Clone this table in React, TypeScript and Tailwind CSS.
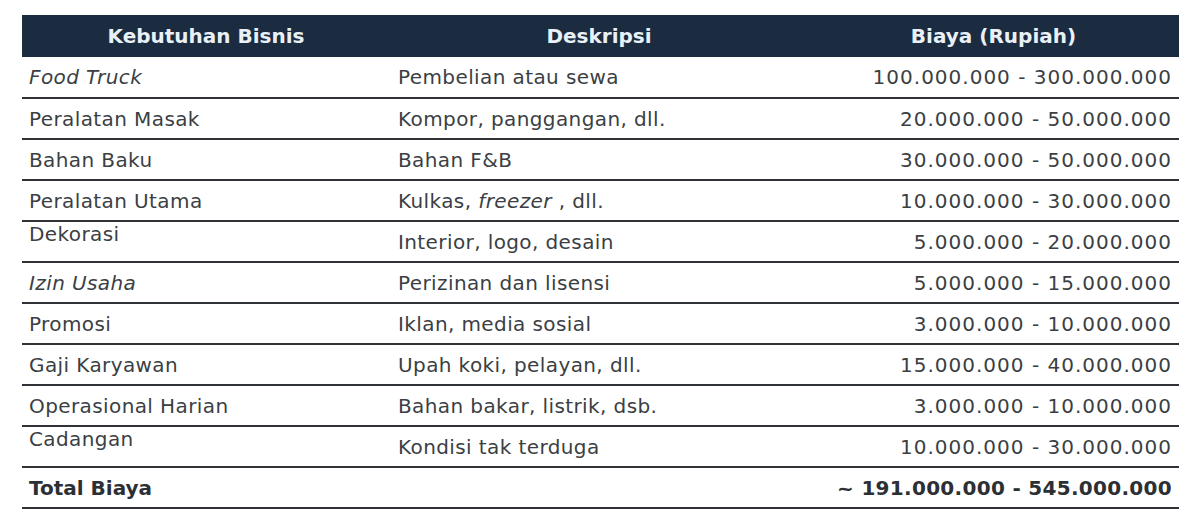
const rows: { need: React.ReactNode; desc: React.ReactNode; cost: string; top?: boolean }[] = [
  { need: <i>Food Truck</i>, desc: "Pembelian atau sewa", cost: "100.000.000 - 300.000.000" },
  { need: "Peralatan Masak", desc: "Kompor, panggangan, dll.", cost: "20.000.000 - 50.000.000" },
  { need: "Bahan Baku", desc: "Bahan F&B", cost: "30.000.000 - 50.000.000" },
  {
    need: "Peralatan Utama",
    desc: (
      <>
        Kulkas, <i>freezer</i> , dll.
      </>
    ),
    cost: "10.000.000 - 30.000.000",
  },
  { need: "Dekorasi", desc: "Interior, logo, desain", cost: "5.000.000 - 20.000.000", top: true },
  { need: <i>Izin Usaha</i>, desc: "Perizinan dan lisensi", cost: "5.000.000 - 15.000.000" },
  { need: "Promosi", desc: "Iklan, media sosial", cost: "3.000.000 - 10.000.000" },
  { need: "Gaji Karyawan", desc: "Upah koki, pelayan, dll.", cost: "15.000.000 - 40.000.000" },
  { need: "Operasional Harian", desc: "Bahan bakar, listrik, dsb.", cost: "3.000.000 - 10.000.000" },
  { need: "Cadangan", desc: "Kondisi tak terduga", cost: "10.000.000 - 30.000.000", top: true },
];

export default function App() {
  return (
    <main className="min-h-[527px] bg-white pl-[22px] pr-[21px] pt-[15px] font-['DejaVu_Sans',sans-serif] text-[20px] text-[#3b3f44]">
      <table className="w-full border-collapse">
        <colgroup>
          <col className="w-[368px]" />
          <col className="w-[418px]" />
          <col />
        </colgroup>
        <thead>
          <tr className="h-[42px] bg-[#1b2b40] text-[#e9f1f7]">
            <th className="text-center font-bold">Kebutuhan Bisnis</th>
            <th className="text-center font-bold">Deskripsi</th>
            <th className="text-center font-bold">Biaya (Rupiah)</th>
          </tr>
        </thead>
        <tbody>
          {rows.map((r, i) => (
            <tr key={i} className="h-[41px] border-b-2 border-[#2f3236]">
              <td className={`pl-[7px] leading-6 tracking-[0.4px] ${r.top ? "align-top" : "align-middle"}`}>
                {r.need}
              </td>
              <td className="pl-2 leading-6 tracking-[0.4px]">{r.desc}</td>
              <td className="pr-[7px] text-right leading-6 tracking-[1px]">{r.cost}</td>
            </tr>
          ))}
          <tr className="h-[41px] border-b-2 border-[#2f3236] font-bold text-[#2c3035]">
            <td className="pl-[7px] leading-6">Total Biaya</td>
            <td />
            <td className="pr-[7px] text-right leading-6 tracking-[0.3px]">~ 191.000.000 - 545.000.000</td>
          </tr>
        </tbody>
      </table>
    </main>
  );
}
